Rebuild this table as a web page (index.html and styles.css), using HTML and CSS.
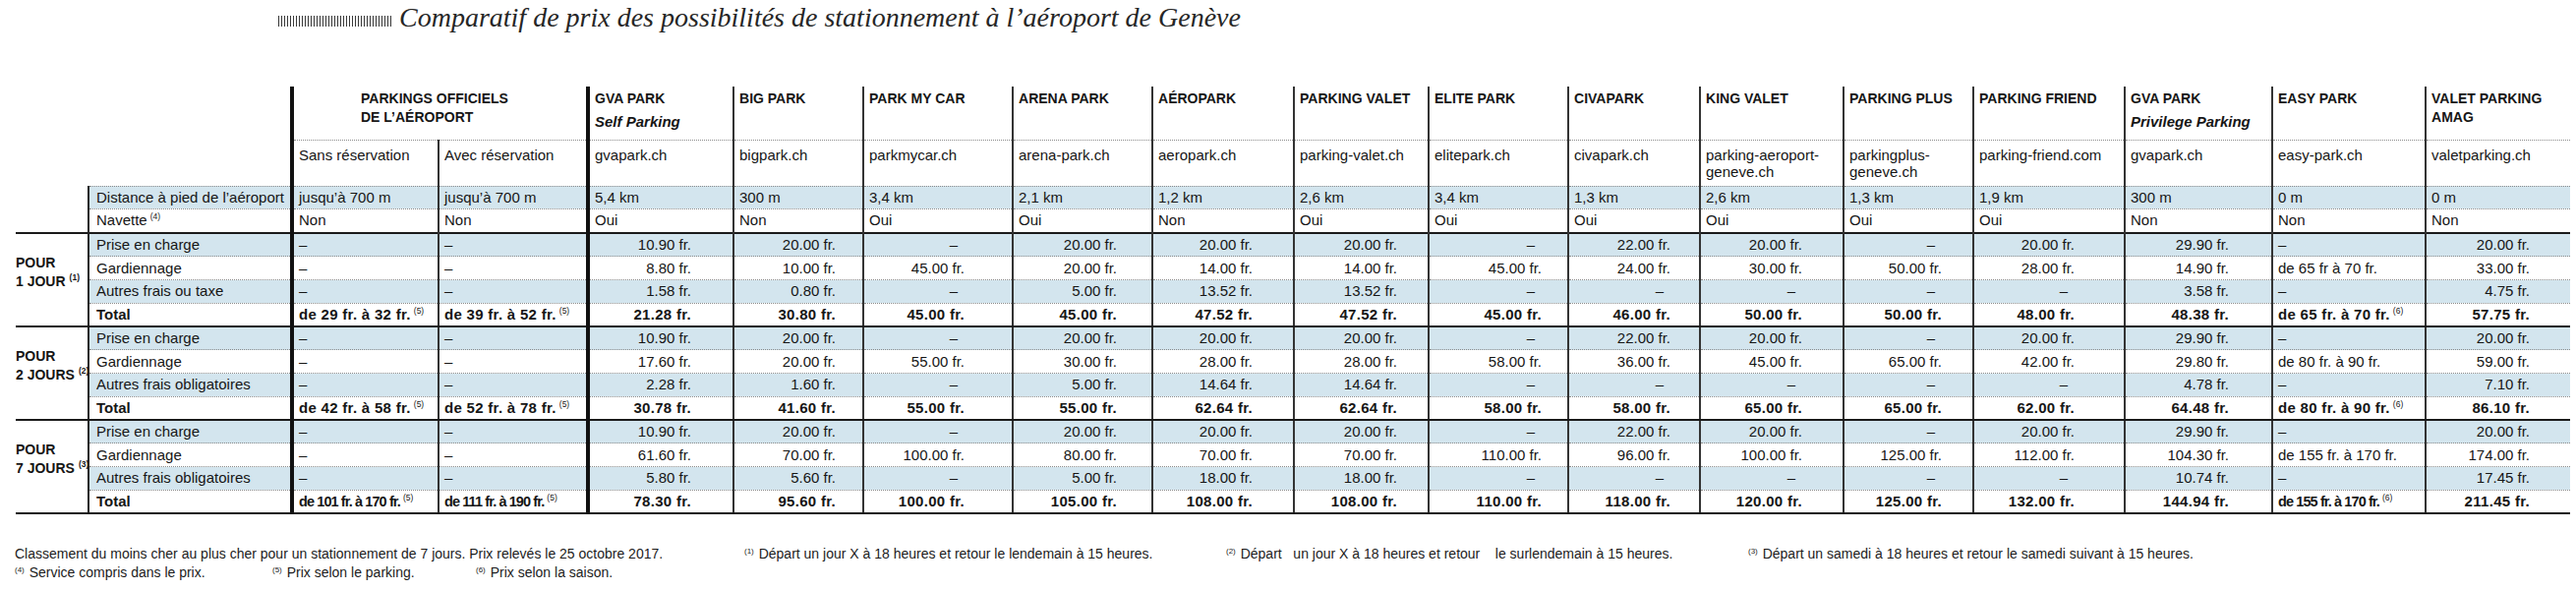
FILE: index.html
```html
<!DOCTYPE html>
<html lang="fr">
<head>
<meta charset="utf-8">
<title>Comparatif de prix des possibilités de stationnement à l’aéroport de Genève</title>
<link rel="stylesheet" href="styles.css">
</head>
<body>
<h1 class="title"><span class="hatch"></span><span class="title-text">Comparatif de prix des possibilités de stationnement à l’aéroport de Genève</span></h1>

<table class="cmp">
  <colgroup>
    <col class="w-grp"><col class="w-lbl">
    <col class="w149"><col class="w152"><col class="w148"><col class="w132">
    <col class="w152"><col class="w142"><col class="w144"><col class="w137">
    <col class="w142"><col class="w134"><col class="w146"><col class="w132">
    <col class="w154"><col class="w150"><col class="w156"><col class="w147">
  </colgroup>
  <tbody>
    <tr class="hd">
      <td colspan="2" class="blank"></td>
      <th colspan="2" class="off"><div class="nm">PARKINGS OFFICIELS<br>DE L’AÉROPORT</div></th>
      <th><div class="nm">GVA PARK</div><div class="sub">Self Parking</div></th>
      <th><div class="nm">BIG PARK</div></th>
      <th><div class="nm">PARK MY CAR</div></th>
      <th><div class="nm">ARENA PARK</div></th>
      <th><div class="nm">AÉROPARK</div></th>
      <th><div class="nm">PARKING VALET</div></th>
      <th><div class="nm">ELITE PARK</div></th>
      <th><div class="nm">CIVAPARK</div></th>
      <th><div class="nm">KING VALET</div></th>
      <th><div class="nm">PARKING PLUS</div></th>
      <th><div class="nm">PARKING FRIEND</div></th>
      <th><div class="nm">GVA PARK</div><div class="sub">Privilege Parking</div></th>
      <th><div class="nm">EASY PARK</div></th>
      <th><div class="nm">VALET PARKING<br>AMAG</div></th>
    </tr>
    <tr class="url">
      <td colspan="2" class="blank"></td>
      <td>Sans réservation</td>
      <td>Avec réservation</td>
      <td>gvapark.ch</td>
      <td>bigpark.ch</td>
      <td>parkmycar.ch</td>
      <td>arena-park.ch</td>
      <td>aeropark.ch</td>
      <td>parking-valet.ch</td>
      <td>elitepark.ch</td>
      <td>civapark.ch</td>
      <td>parking-aeroport-<br>geneve.ch</td>
      <td>parkingplus-<br>geneve.ch</td>
      <td>parking-friend.com</td>
      <td>gvapark.ch</td>
      <td>easy-park.ch</td>
      <td>valetparking.ch</td>
    </tr>
    <tr class="dist sh">
      <td class="blank"></td>
      <td class="lbl">Distance à pied de l’aéroport</td>
      <td>jusqu’à 700 m</td><td>jusqu’à 700 m</td><td>5,4 km</td><td>300 m</td>
      <td>3,4 km</td><td>2,1 km</td><td>1,2 km</td><td>2,6 km</td>
      <td>3,4 km</td><td>1,3 km</td><td>2,6 km</td><td>1,3 km</td>
      <td>1,9 km</td><td>300 m</td><td>0 m</td><td>0 m</td>
    </tr>
    <tr class="nav">
      <td class="blank"></td>
      <td class="lbl">Navette<sup>(4)</sup></td>
      <td>Non</td><td>Non</td><td>Oui</td><td>Non</td>
      <td>Oui</td><td>Oui</td><td>Non</td><td>Oui</td>
      <td>Oui</td><td>Oui</td><td>Oui</td><td>Oui</td>
      <td>Oui</td><td>Non</td><td>Non</td><td>Non</td>
    </tr>

    <!-- 1 jour -->
    <tr class="n sh">
      <td rowspan="4" class="grp"><div class="gl">POUR<br>1 JOUR<sup>(1)</sup></div></td>
      <td class="lbl">Prise en charge</td>
      <td>–</td><td>–</td><td>10.90 fr.</td><td>20.00 fr.</td>
      <td><span class="d">–</span></td><td>20.00 fr.</td><td>20.00 fr.</td><td>20.00 fr.</td>
      <td><span class="d">–</span></td><td>22.00 fr.</td><td>20.00 fr.</td><td><span class="d">–</span></td>
      <td>20.00 fr.</td><td>29.90 fr.</td><td>–</td><td>20.00 fr.</td>
    </tr>
    <tr class="n">
      <td class="lbl">Gardiennage</td>
      <td>–</td><td>–</td><td>8.80 fr.</td><td>10.00 fr.</td>
      <td>45.00 fr.</td><td>20.00 fr.</td><td>14.00 fr.</td><td>14.00 fr.</td>
      <td>45.00 fr.</td><td>24.00 fr.</td><td>30.00 fr.</td><td>50.00 fr.</td>
      <td>28.00 fr.</td><td>14.90 fr.</td><td>de 65 fr à 70 fr.</td><td>33.00 fr.</td>
    </tr>
    <tr class="n sh">
      <td class="lbl">Autres frais ou taxe</td>
      <td>–</td><td>–</td><td>1.58 fr.</td><td>0.80 fr.</td>
      <td><span class="d">–</span></td><td>5.00 fr.</td><td>13.52 fr.</td><td>13.52 fr.</td>
      <td><span class="d">–</span></td><td><span class="d">–</span></td><td><span class="d">–</span></td><td><span class="d">–</span></td>
      <td><span class="d">–</span></td><td>3.58 fr.</td><td>–</td><td>4.75 fr.</td>
    </tr>
    <tr class="n tot">
      <td class="lbl">Total</td>
      <td>de 29 fr. à 32 fr.<sup>(5)</sup></td><td>de 39 fr. à 52 fr.<sup>(5)</sup></td><td>21.28 fr.</td><td>30.80 fr.</td>
      <td>45.00 fr.</td><td>45.00 fr.</td><td>47.52 fr.</td><td>47.52 fr.</td>
      <td>45.00 fr.</td><td>46.00 fr.</td><td>50.00 fr.</td><td>50.00 fr.</td>
      <td>48.00 fr.</td><td>48.38 fr.</td><td>de 65 fr. à 70 fr.<sup>(6)</sup></td><td>57.75 fr.</td>
    </tr>

    <!-- 2 jours -->
    <tr class="n sh">
      <td rowspan="4" class="grp"><div class="gl">POUR<br>2 JOURS<sup>(2)</sup></div></td>
      <td class="lbl">Prise en charge</td>
      <td>–</td><td>–</td><td>10.90 fr.</td><td>20.00 fr.</td>
      <td><span class="d">–</span></td><td>20.00 fr.</td><td>20.00 fr.</td><td>20.00 fr.</td>
      <td><span class="d">–</span></td><td>22.00 fr.</td><td>20.00 fr.</td><td><span class="d">–</span></td>
      <td>20.00 fr.</td><td>29.90 fr.</td><td>–</td><td>20.00 fr.</td>
    </tr>
    <tr class="n">
      <td class="lbl">Gardiennage</td>
      <td>–</td><td>–</td><td>17.60 fr.</td><td>20.00 fr.</td>
      <td>55.00 fr.</td><td>30.00 fr.</td><td>28.00 fr.</td><td>28.00 fr.</td>
      <td>58.00 fr.</td><td>36.00 fr.</td><td>45.00 fr.</td><td>65.00 fr.</td>
      <td>42.00 fr.</td><td>29.80 fr.</td><td>de 80 fr. à 90 fr.</td><td>59.00 fr.</td>
    </tr>
    <tr class="n sh">
      <td class="lbl">Autres frais obligatoires</td>
      <td>–</td><td>–</td><td>2.28 fr.</td><td>1.60 fr.</td>
      <td><span class="d">–</span></td><td>5.00 fr.</td><td>14.64 fr.</td><td>14.64 fr.</td>
      <td><span class="d">–</span></td><td><span class="d">–</span></td><td><span class="d">–</span></td><td><span class="d">–</span></td>
      <td><span class="d">–</span></td><td>4.78 fr.</td><td>–</td><td>7.10 fr.</td>
    </tr>
    <tr class="n tot">
      <td class="lbl">Total</td>
      <td>de 42 fr. à 58 fr.<sup>(5)</sup></td><td>de 52 fr. à 78 fr.<sup>(5)</sup></td><td>30.78 fr.</td><td>41.60 fr.</td>
      <td>55.00 fr.</td><td>55.00 fr.</td><td>62.64 fr.</td><td>62.64 fr.</td>
      <td>58.00 fr.</td><td>58.00 fr.</td><td>65.00 fr.</td><td>65.00 fr.</td>
      <td>62.00 fr.</td><td>64.48 fr.</td><td>de 80 fr. à 90 fr.<sup>(6)</sup></td><td>86.10 fr.</td>
    </tr>

    <!-- 7 jours -->
    <tr class="n sh">
      <td rowspan="4" class="grp"><div class="gl">POUR<br>7 JOURS<sup>(3)</sup></div></td>
      <td class="lbl">Prise en charge</td>
      <td>–</td><td>–</td><td>10.90 fr.</td><td>20.00 fr.</td>
      <td><span class="d">–</span></td><td>20.00 fr.</td><td>20.00 fr.</td><td>20.00 fr.</td>
      <td><span class="d">–</span></td><td>22.00 fr.</td><td>20.00 fr.</td><td><span class="d">–</span></td>
      <td>20.00 fr.</td><td>29.90 fr.</td><td>–</td><td>20.00 fr.</td>
    </tr>
    <tr class="n">
      <td class="lbl">Gardiennage</td>
      <td>–</td><td>–</td><td>61.60 fr.</td><td>70.00 fr.</td>
      <td>100.00 fr.</td><td>80.00 fr.</td><td>70.00 fr.</td><td>70.00 fr.</td>
      <td>110.00 fr.</td><td>96.00 fr.</td><td>100.00 fr.</td><td>125.00 fr.</td>
      <td>112.00 fr.</td><td>104.30 fr.</td><td>de 155 fr. à 170 fr.</td><td>174.00 fr.</td>
    </tr>
    <tr class="n sh">
      <td class="lbl">Autres frais obligatoires</td>
      <td>–</td><td>–</td><td>5.80 fr.</td><td>5.60 fr.</td>
      <td><span class="d">–</span></td><td>5.00 fr.</td><td>18.00 fr.</td><td>18.00 fr.</td>
      <td><span class="d">–</span></td><td><span class="d">–</span></td><td><span class="d">–</span></td><td><span class="d">–</span></td>
      <td><span class="d">–</span></td><td>10.74 fr.</td><td>–</td><td>17.45 fr.</td>
    </tr>
    <tr class="n tot">
      <td class="lbl">Total</td>
      <td><span class="cond">de 101 fr. à 170 fr.</span><sup>(5)</sup></td><td><span class="cond">de 111 fr. à 190 fr.</span><sup>(5)</sup></td><td>78.30 fr.</td><td>95.60 fr.</td>
      <td>100.00 fr.</td><td>105.00 fr.</td><td>108.00 fr.</td><td>108.00 fr.</td>
      <td>110.00 fr.</td><td>118.00 fr.</td><td>120.00 fr.</td><td>125.00 fr.</td>
      <td>132.00 fr.</td><td>144.94 fr.</td><td><span class="cond">de 155 fr. à 170 fr.</span><sup>(6)</sup></td><td>211.45 fr.</td>
    </tr>
  </tbody>
</table>

<div class="notes">
  <div class="nl">
    <span class="f1">Classement du moins cher au plus cher pour un stationnement de 7 jours. Prix relevés le 25 octobre 2017.</span>
    <span class="f2"><sup>(1)</sup> Départ un jour X à 18 heures et retour le lendemain à 15 heures.</span>
    <span class="f3"><sup>(2)</sup> Départ   un jour X à 18 heures et retour    le surlendemain à 15 heures.</span>
    <span><sup>(3)</sup> Départ un samedi à 18 heures et retour le samedi suivant à 15 heures.</span>
  </div>
  <div class="nl">
    <span class="f4"><sup>(4)</sup> Service compris dans le prix.</span>
    <span class="f5"><sup>(5)</sup> Prix selon le parking.</span>
    <span><sup>(6)</sup> Prix selon la saison.</span>
  </div>
</div>
</body>
</html>
```

FILE: styles.css
```css
* { box-sizing: border-box; }
html, body { margin: 0; padding: 0; background: #fff; }
body {
  width: 2620px;
  font-family: "Liberation Sans", Arial, sans-serif;
  color: #161616;
  overflow: hidden;
}

/* ---------- title ---------- */
.title {
  margin: 0;
  padding: 0 0 0 283px;
  height: 40px;
  display: flex;
  align-items: baseline;
  gap: 6px;
  font: italic 400 28px/36px "Liberation Serif", "DejaVu Serif", serif;
  color: #262626;
}
.hatch {
  width: 117px;
  height: 11px;
  background: repeating-linear-gradient(90deg, #3a3a3a 0 1px, transparent 1px 3px);
}

/* ---------- table ---------- */
.cmp {
  margin: 48px 0 0 16px;
  border-collapse: collapse;
  table-layout: fixed;
  width: 2598px;
  font-size: 15px;
}
.w-grp { width: 74px; }
.w-lbl { width: 207px; }
.w132 { width: 132px; }
.w134 { width: 134px; }
.w137 { width: 137px; }
.w142 { width: 142px; }
.w144 { width: 144px; }
.w146 { width: 146px; }
.w147 { width: 147px; }
.w148 { width: 148px; }
.w149 { width: 149px; }
.w150 { width: 150px; }
.w152 { width: 152px; }
.w154 { width: 154px; }
.w156 { width: 156px; }

.cmp td, .cmp th {
  padding: 0 4px 0 5px;
  border-left: 2px solid #333;
  border-bottom: 1px dotted #8a8a8a;
  text-align: left;
  vertical-align: middle;
  white-space: nowrap;
  font-weight: 400;
  line-height: 18px;
}
.cmp tr > :nth-last-child(16),
.cmp tr > :nth-last-child(14) { border-left: 4px solid #111; }
.cmp tr > th.off { border-left: 4px solid #111; padding-left: 68px; }
.cmp tr > td.blank { border: none; background: none; }

/* header row */
.hd { height: 54px; }
.hd > th { vertical-align: top; padding-top: 3px; }
.nm { font-size: 14px; font-weight: 700; line-height: 19px; }
.sub { font-size: 15px; font-weight: 700; font-style: italic; line-height: 18px; margin-top: 5px; }

/* url row */
.url { height: 47px; }
.url > td { vertical-align: top; padding-top: 6px; line-height: 17px; }

.dist { height: 23px; }
.dist > td { border-top: 1px dotted #8a8a8a; }
.nav { height: 25px; }

.cmp td.lbl { padding-left: 7px; border-left: 2px solid #222; }

.sh > td:not(.grp):not(.blank) { background: #d3e5ee; }

sup { font-size: 8.5px; line-height: 0; vertical-align: 6px; font-weight: 400; margin-left: 3px; }

/* groups */
.cmp td.grp {
  border-left: none;
  border-top: 2px solid #1a1a1a;
  border-bottom: 2px solid #1a1a1a;
  padding: 0 0 16px 0;
  vertical-align: middle;
}
.gl { font-size: 14px; font-weight: 700; line-height: 19px; }
.gl sup { font-weight: 700; margin-left: 4px; }

.n { height: 23.75px; }
.n > td { text-align: right; }
.n > td:nth-last-child(16),
.n > td:nth-last-child(15),
.n > td:nth-last-child(2),
.n > td.lbl,
.n > td.grp { text-align: left; }

.n > td:nth-last-child(14) { padding-right: 42px; }
.n > td:nth-last-child(13) { padding-right: 27px; }
.n > td:nth-last-child(12) { padding-right: 48px; }
.n > td:nth-last-child(11) { padding-right: 35px; }
.n > td:nth-last-child(10) { padding-right: 41px; }
.n > td:nth-last-child(9)  { padding-right: 31px; }
.n > td:nth-last-child(8)  { padding-right: 26px; }
.n > td:nth-last-child(7)  { padding-right: 29px; }
.n > td:nth-last-child(6)  { padding-right: 41px; }
.n > td:nth-last-child(5)  { padding-right: 31px; }
.n > td:nth-last-child(4)  { padding-right: 50px; }
.n > td:nth-last-child(3)  { padding-right: 43px; }
.n > td:nth-last-child(1)  { padding-right: 41px; }

.d { display: inline-block; margin-right: 7px; }

.tot > td { font-weight: 700; letter-spacing: 0.3px; border-bottom: 2px solid #1a1a1a; }
.tot > td.lbl { letter-spacing: 0; }
.tot sup { letter-spacing: 0; }
.cond { letter-spacing: -0.9px; font-size: 14.5px; }
.nav + .n > td { border-top: 2px solid #1a1a1a; }

/* ---------- notes ---------- */
.notes {
  margin: 31px 0 0 15px;
  font-size: 14px;
  line-height: 19px;
  color: #1c1c1c;
}
.nl { display: flex; white-space: pre; }
.nl sup { margin-left: 0; margin-right: 1px; vertical-align: 5px; font-size: 8px; }
.f1 { width: 742px; }
.f2 { width: 490px; }
.f3 { width: 531px; }
.f4 { width: 262px; }
.f5 { width: 207px; }
```
